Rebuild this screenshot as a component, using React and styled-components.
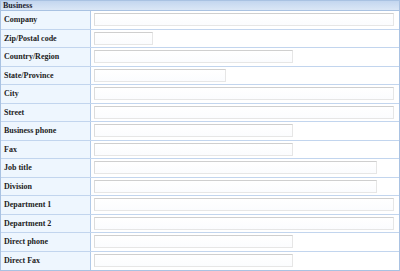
import React from "react";
import styled, { createGlobalStyle } from "styled-components";

const GlobalStyle = createGlobalStyle`
  html, body {
    margin: 0;
    padding: 0;
    background: #ffffff;
  }
  * {
    box-sizing: border-box;
  }
`;

const fields = [
  { label: "Company", width: 300 },
  { label: "Zip/Postal code", width: 59 },
  { label: "Country/Region", width: 199 },
  { label: "State/Province", width: 132 },
  { label: "City", width: 300 },
  { label: "Street", width: 300 },
  { label: "Business phone", width: 199 },
  { label: "Fax", width: 199 },
  { label: "Job title", width: 283 },
  { label: "Division", width: 283 },
  { label: "Department 1", width: 300 },
  { label: "Department 2", width: 300 },
  { label: "Direct phone", width: 199 },
  { label: "Direct Fax", width: 199 },
];

function App() {
  return (
    <>
      <GlobalStyle />
      <Panel>
        <Header>Business</Header>
        {fields.map((f, i) => (
          <Row key={f.label} $last={i === fields.length - 1}>
            <Label>{f.label}</Label>
            <Value>
              <Input type="text" $w={f.width} />
            </Value>
          </Row>
        ))}
      </Panel>
    </>
  );
}

const Panel = styled.div`
  width: 400px;
  height: 271px;
  border: 1px solid #a9c2e2;
  display: grid;
  grid-template-rows: 10px repeat(14, 1fr);
  font-family: "Liberation Serif", "DejaVu Serif", serif;
  color: #1c1c1c;
`;

const Header = styled.div`
  background: linear-gradient(#c3d6ef, #dbe7f6);
  border-bottom: 1px solid #a9c2e2;
  font-size: 8px;
  font-weight: bold;
  line-height: 9px;
  padding-left: 2px;
  color: #1c2430;
`;

const Row = styled.div`
  display: grid;
  grid-template-columns: 90px 1fr;
  border-bottom: ${(p) => (p.$last ? "none" : "1px solid #c2d5ee")};
`;

const Label = styled.div`
  background: #eef6fe;
  border-right: 1px solid #b2cae8;
  display: flex;
  align-items: center;
  padding-left: 3px;
  font-size: 8px;
  font-weight: bold;
  white-space: nowrap;
`;

const Value = styled.div`
  background: #ffffff;
  display: flex;
  align-items: center;
  padding-left: 3px;
`;

const Input = styled.input`
  width: ${(p) => p.$w}px;
  height: 13px;
  margin: 0;
  padding: 0;
  border: 1px solid #e6e6e6;
  border-top-color: #cfcfcf;
  border-left-color: #dcdcdc;
  background: linear-gradient(#ffffff, #fbfcfe);
  outline: none;
`;

export default App;
